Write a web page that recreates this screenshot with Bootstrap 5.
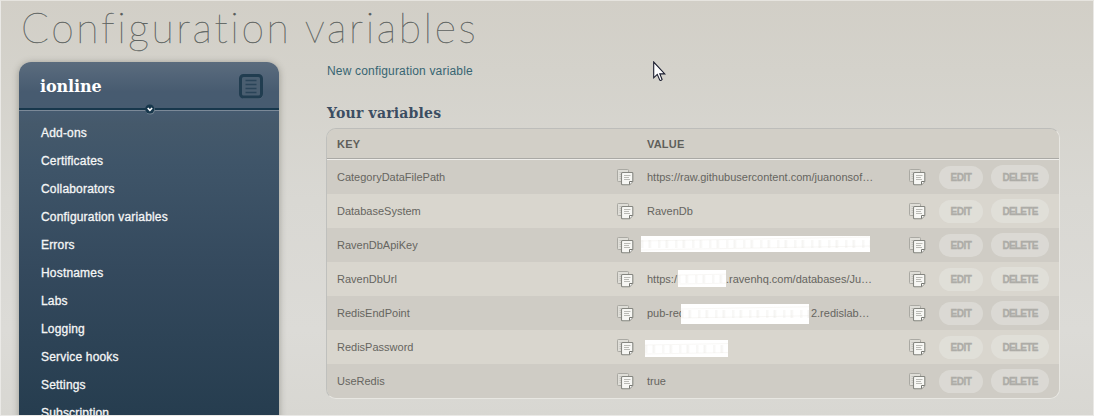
<!DOCTYPE html>
<html lang="en">
<head>
<meta charset="utf-8">
<meta name="viewport" content="width=device-width, initial-scale=1">
<title>Configuration variables</title>
<link href="https://cdn.jsdelivr.net/npm/bootstrap@5.3.0/dist/css/bootstrap.min.css" rel="stylesheet">
<style>
html,body{height:416px;overflow:hidden}
body{background:linear-gradient(#d2cfc7 0,#d4d2cb 70px,#d9d8d3 200px,#dcdbd7 330px,#d8d7d2 416px);font-family:"Liberation Sans",Arial,sans-serif;font-size:12px;line-height:16px;color:#666560}
.page-frame{height:416px;border:1px solid #eae9e6;border-top-color:#e6e4df;overflow:hidden}
.page-title{height:61px;padding:1px 0 0 20px;font:100 41px/52px Lato,sans-serif;letter-spacing:2.58px;color:#4f5553;white-space:nowrap;-webkit-text-stroke:.35px #5a5f5d;opacity:.95}
.side-panel{width:260px;height:420px;margin-left:18px;border-radius:12px 12px 0 0;background:linear-gradient(#5b6c7e 0,#475b70 30px,#465b70 50px,#45596b 62px,#3f5569 100px,#34495d 210px,#263d4f 354px);box-shadow:0 1px 7px rgba(60,60,50,.4);color:#f5f6f6}
.panel-head{height:49px;padding:0 16px 0 21px;border-bottom:1px solid #7b8998;box-shadow:inset 0 -2px #17374c}
.app-name{font:bold 16px/24px "DejaVu Serif",serif;color:#fff;letter-spacing:-.1px;padding-top:2px}
.panel-knob{left:126px;top:42px}
.side-nav{padding-top:8px}
.side-nav .nav-link{padding:6px 22px;line-height:16px;color:#f5f6f6;letter-spacing:.18px;-webkit-text-stroke:.3px #f5f6f6}
.content-area{width:734px;margin-left:47px}
.new-link{display:block;color:#376572;margin-left:1px;line-height:18px;text-decoration:none;letter-spacing:.17px}
.section-title{font:bold 14px/20px "DejaVu Serif",serif;color:#3b4d62;margin:23px 0 5px 1px;letter-spacing:.2px}
.var-table{width:734px;border:1px solid #e8e7e2;border-top:1px solid #bdbdba;border-left-color:#bfc0bd;border-radius:10px;overflow:hidden;font-size:11px}
.var-row{height:34px;display:grid;grid-template-columns:280px 30px 262px 30px 52px 58px;padding:0 9px 0 10px;background:#d9d6ce;align-items:center}
.var-row:nth-child(even){background:#cfccc5}
.var-row.var-head{height:31px;background:#d2cfc7;border-bottom:1px solid #efeeeb;box-shadow:inset 0 -1px #aaa9a5;font-weight:bold;letter-spacing:.2px;color:#5f5f5b}
.copy-icon{display:block;margin-top:1px}
.pill{display:flex;align-items:center;justify-content:center;border:0;padding:1px 0 0;border-radius:12px;background:rgba(232,232,228,.48);color:#adaca7;font:bold 10px/12px "Liberation Sans",sans-serif;-webkit-text-stroke:.3px #adaca7}
.pill-edit{width:44px;height:23px;letter-spacing:-.5px}
.pill-del{width:58px;height:24px;letter-spacing:-.7px}
.smudge{position:relative;display:block;flex:none;background:repeating-linear-gradient(90deg,rgba(225,223,217,.22) 0 2px,transparent 3px 7px,rgba(225,223,217,.3) 8px 9px,transparent 11px 17px) 0 50%/100% 8px no-repeat,repeating-linear-gradient(179deg,#fff 0 4px,#f8f7f5 5px,#fff 6px 9px)}
.pointer{left:653px;top:61px}
</style>
</head>
<body>
<svg class="d-none" aria-hidden="true">
<symbol id="copy" viewBox="0 0 17 17">
<rect x=".5" y=".5" width="11" height="12" rx=".8" fill="#dfded8" stroke="#aaa9a3"/>
<path d="M2.500 3.500h2M2.500 5.500h2M2.500 7.500h2M2.500 9.500h2" stroke="#c4c3be"/>
<path d="M5.500 3.500h9.500q.8 0 .8.8v8l-3.300 3.500h-7q-1 0-1-1V4.500q0-1 1-1z" fill="#f7f7f4" stroke="#858680" stroke-width="1.100"/>
<path d="M12.500 15.500v-3h3" fill="#fff" stroke="#777872"/>
<path d="M7 6.500h6.500M7 8.500h5M7 10.500h6" stroke="#babab5"/>
</symbol>
</svg>
<div class="page-frame">
<h1 class="page-title m-0">Configuration variables</h1>
<div class="d-flex align-items-start">
<aside class="side-panel position-relative flex-shrink-0">
<div class="panel-head d-flex align-items-center justify-content-between">
<span class="app-name">ionline</span>
<svg width="24" height="25" viewBox="0 0 24 25"><path d="M4 24.500h16q3.500 0 3.500-3.500V5" fill="none" stroke="#5e7081"/><rect x="1.500" y="1.500" width="21" height="21.500" rx="3" fill="#4a5e70" stroke="#213d50" stroke-width="3"/><path d="M6.500 6.500h11M6.500 10.500h11M6.500 14.500h11M6.500 18.500h11" stroke="#2a4458" stroke-width="1.300"/></svg>
</div>
<svg class="panel-knob position-absolute" width="10" height="11" viewBox="0 0 10 11"><circle cx="5.300" cy="6" r="4.600" fill="#71818e"/><circle cx="4.800" cy="5" r="4.600" fill="#17374c"/><path d="M2.700 4l2.200 2.300L7.100 4" fill="none" stroke="#fff" stroke-width="1.600"/></svg>
<nav class="side-nav nav flex-column flex-nowrap">
<a class="nav-link">Add-ons</a><a class="nav-link">Certificates</a><a class="nav-link">Collaborators</a><a class="nav-link">Configuration variables</a><a class="nav-link">Errors</a><a class="nav-link">Hostnames</a><a class="nav-link">Labs</a><a class="nav-link">Logging</a><a class="nav-link">Service hooks</a><a class="nav-link">Settings</a><a class="nav-link">Subscription</a>
</nav>
</aside>
<main class="content-area">
<a class="new-link">New configuration variable</a>
<h2 class="section-title">Your variables</h2>
<div class="var-table" id="vars">
<div class="var-row var-head"><span>KEY</span><span></span><span>VALUE</span></div>
</div>
</main>
</div>
</div>
<svg class="pointer position-absolute" width="13" height="21" viewBox="0 0 13 21"><path d="M.7 1v15.800l3.600-3.400 2.500 5.700q1 .9 2.300-.6l-2.300-5.600h5L.7 1z" fill="#fff" stroke="#171a2c" stroke-width="1.100"/></svg>
<script src="https://cdn.jsdelivr.net/npm/bootstrap@5.3.0/dist/js/bootstrap.bundle.min.js"></script>
<script>
const hidden=(w,h,l,r,t)=>`<span class="smudge" style="width:${w}px;height:${h}px;margin-left:${l}px;margin-right:${r}px;margin-top:${t}px"></span>`;
const rows=[
["CategoryDataFilePath","https://raw.githubusercontent.com/juanonsof…"],
["DatabaseSystem","RavenDb"],
["RavenDbApiKey",hidden(229,16,-6,0,-2)],
["RavenDbUrl","<span>https:/</span>"+hidden(48,17,1,0,-1)+"<span>.ravenhq.com/databases/Ju…</span>"],
["RedisEndPoint","<span>pub-red</span>"+hidden(128,20,-4,2,1)+"<span>2.redislab…</span>"],
["RedisPassword",hidden(83,17,-2,0,3)],
["UseRedis","true"]];
const icon='<svg class="copy-icon" width="17" height="17"><use href="#copy"/></svg>';
document.getElementById("vars").insertAdjacentHTML("beforeend",rows.map(([k,v])=>`<div class="var-row"><span>${k}</span>${icon}<div class="d-flex align-items-center text-nowrap">${v}</div>${icon}<button class="pill pill-edit">EDIT</button><button class="pill pill-del">DELETE</button></div>`).join(""));
</script>
</body>
</html>
